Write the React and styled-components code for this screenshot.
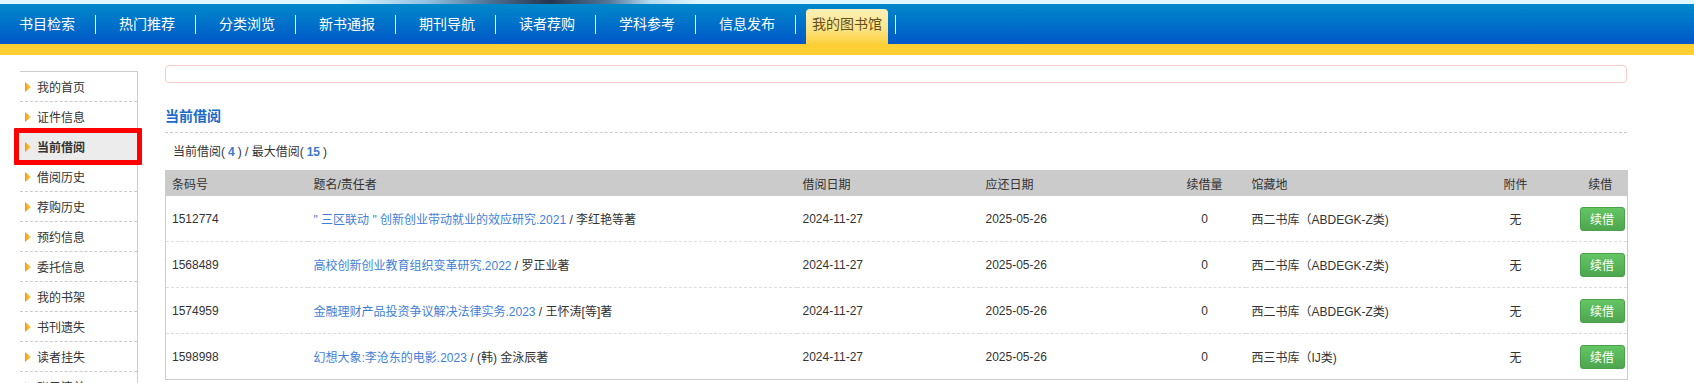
import React from 'react';
import styled, { createGlobalStyle } from 'styled-components';

const GlobalStyle = createGlobalStyle`
  html, body {
    margin: 0;
    padding: 0;
    background: #fff;
  }
  body {
    font-family: Arial, "Liberation Sans", "Noto Sans CJK SC", sans-serif;
    font-size: 12px;
    color: #333;
  }
`;

const TopStrip = styled.div`
  height: 4px;
  background: linear-gradient(
    to right,
    #e0f6fe 0,
    #e0f6fe 340px,
    #c4e6f6 370px,
    #8fbfe0 430px,
    #4d6f93 490px,
    #25354f 550px,
    #54789b 610px,
    #b4dbf0 650px,
    #e0f6fe 700px,
    #e0f6fe 100%
  );
`;

const NavBar = styled.div`
  height: 40px;
  display: flex;
  align-items: center;
  background: linear-gradient(#0089ca, #0057c9);
`;

const NavLink = styled.a`
  padding: 0 20px 0 23px;
  color: #fff;
  font-size: 14px;
  line-height: 20px;
  white-space: nowrap;
  text-decoration: none;
  &:first-child {
    padding-left: 19px;
  }
`;

const ActiveWrap = styled.div`
  align-self: flex-end;
  padding: 0 7px 0 10px;
`;

const ActiveTab = styled.a`
  display: block;
  padding: 0 6px 5px;
  height: 30px;
  line-height: 30px;
  font-size: 14px;
  color: #65501a;
  text-decoration: none;
  white-space: nowrap;
  border-radius: 4px 4px 0 0;
  background: linear-gradient(#fdf1b8, #fde48a 55%, #fdd03c);
`;

const Sep = styled.span`
  width: 1px;
  height: 19px;
  background: #fff;
  flex: none;
`;

const YellowBar = styled.div`
  height: 11px;
  background: #fdcf33;
`;

const Body = styled.div`
  display: flex;
  align-items: flex-start;
  padding-left: 20px;
  gap: 27px;
`;

const Side = styled.ul`
  list-style: none;
  margin: 16px 0 0;
  padding: 0;
  width: 117px;
  border-top: 1px solid #ccc;
  border-right: 1px solid #ccc;
`;

const SideItem = styled.li`
  position: relative;
  box-sizing: border-box;
  height: 30px;
  display: flex;
  align-items: center;
  gap: 6px;
  padding-left: 5px;
  border-bottom: 1px dashed #ccc;
  font-size: 12px;
  color: #333;
  font-weight: ${p => (p.$active ? 700 : 400)};
  background: ${p => (p.$active ? '#ececec' : 'transparent')};
`;

const Marker = styled.span`
  position: absolute;
  left: -6px;
  right: -5px;
  top: -4px;
  bottom: -4px;
  border: 5px solid #f00;
  border-radius: 1px;
  pointer-events: none;
`;

const Main = styled.div`
  width: 1462px;
  padding-top: 10px;
`;

const NoticeBox = styled.div`
  box-sizing: border-box;
  height: 18px;
  border: 1px solid #f8caca;
  border-radius: 4px;
`;

const Title = styled.h2`
  margin: 23px 0 0;
  padding-bottom: 6px;
  font-size: 14px;
  line-height: 20px;
  font-weight: 700;
  color: #1b6cca;
  border-bottom: 1px dashed #ccc;
`;

const Summary = styled.div`
  margin: 9px 0 8px;
  padding-left: 8px;
  line-height: 20px;
  font-size: 12px;
  color: #333;
`;

const Num = styled.span`
  color: #3b78d4;
  font-weight: 700;
  padding: 0 3px;
`;

const Table = styled.table`
  width: 1462px;
  table-layout: fixed;
  border-collapse: collapse;
  border: 1px solid #ccc;
  border-top: 0;
`;

const HeadRow = styled.tr`
  background: #cbcbcb;
`;

const Th = styled.th`
  height: 26px;
  padding: 0 6px;
  font-size: 12px;
  font-weight: 400;
  color: #333;
  text-align: ${p => p.$align || 'left'};
`;

const Td = styled.td`
  height: 45px;
  padding: 0 6px;
  font-size: 12px;
  color: #333;
  border-bottom: 1px dashed #ddd;
  text-align: ${p => p.$align || 'left'};
  white-space: nowrap;
`;

const BookLink = styled.a`
  color: #3f7fd9;
  text-decoration: none;
`;

const RenewButton = styled.button`
  width: 45px;
  height: 24px;
  padding: 0;
  border: 1px solid #48a048;
  border-radius: 3px;
  background: linear-gradient(#64c564, #4ea64e);
  color: #fff;
  font-size: 12px;
  font-family: inherit;
  cursor: pointer;
`;

const Arrow = () => (
  <svg width="6" height="10" viewBox="0 0 6 10">
    <defs>
      <linearGradient id="arr" x1="0" y1="0" x2="1" y2="0">
        <stop offset="0" stopColor="#f39a0c" />
        <stop offset="1" stopColor="#fbd24e" />
      </linearGradient>
    </defs>
    <path d="M0 0 L6 5 L0 10 Z" fill="url(#arr)" />
  </svg>
);

const navItems = ['书目检索', '热门推荐', '分类浏览', '新书通报', '期刊导航', '读者荐购', '学科参考', '信息发布'];

const sideItems = [
  '我的首页', '证件信息', '当前借阅', '借阅历史', '荐购历史', '预约信息',
  '委托信息', '我的书架', '书刊遗失', '读者挂失', '账目清单',
];

const loans = [
  { code: '1512774', title: '" 三区联动 " 创新创业带动就业的效应研究.2021', author: '李红艳等著', place: '西二书库（ABDEGK-Z类)' },
  { code: '1568489', title: '高校创新创业教育组织变革研究.2022', author: '罗正业著', place: '西二书库（ABDEGK-Z类)' },
  { code: '1574959', title: '金融理财产品投资争议解决法律实务.2023', author: '王怀涛[等]著', place: '西二书库（ABDEGK-Z类)' },
  { code: '1598998', title: '幻想大象:李沧东的电影.2023', author: '(韩) 金泳辰著', place: '西三书库（IJ类)' },
];

const cols = [142, 489, 183, 184, 82, 212, 116, 54];

export default function App() {
  return (
    <>
      <GlobalStyle />
      <TopStrip />
      <NavBar>
        {navItems.map(n => (
          <React.Fragment key={n}>
            <NavLink href="#">{n}</NavLink>
            <Sep />
          </React.Fragment>
        ))}
        <ActiveWrap>
          <ActiveTab href="#">我的图书馆</ActiveTab>
        </ActiveWrap>
        <Sep />
      </NavBar>
      <YellowBar />
      <Body>
        <Side>
          {sideItems.map(s => (
            <SideItem key={s} $active={s === '当前借阅'}>
              <Arrow />
              {s}
              {s === '当前借阅' && <Marker />}
            </SideItem>
          ))}
        </Side>
        <Main>
          <NoticeBox />
          <Title>当前借阅</Title>
          <Summary>
            当前借阅(<Num>4</Num>) / 最大借阅(<Num>15</Num>)
          </Summary>
          <Table>
            <colgroup>
              {cols.map((w, i) => (
                <col key={i} style={{ width: w }} />
              ))}
            </colgroup>
            <thead>
              <HeadRow>
                <Th>条码号</Th>
                <Th>题名/责任者</Th>
                <Th>借阅日期</Th>
                <Th>应还日期</Th>
                <Th $align="center">续借量</Th>
                <Th>馆藏地</Th>
                <Th $align="center">附件</Th>
                <Th $align="center">续借</Th>
              </HeadRow>
            </thead>
            <tbody>
              {loans.map(l => (
                <tr key={l.code}>
                  <Td>{l.code}</Td>
                  <Td>
                    <BookLink href="#">{l.title}</BookLink> / {l.author}
                  </Td>
                  <Td>2024-11-27</Td>
                  <Td>2025-05-26</Td>
                  <Td $align="center">0</Td>
                  <Td>{l.place}</Td>
                  <Td $align="center">无</Td>
                  <Td $align="center">
                    <RenewButton>续借</RenewButton>
                  </Td>
                </tr>
              ))}
            </tbody>
          </Table>
        </Main>
      </Body>
    </>
  );
}
